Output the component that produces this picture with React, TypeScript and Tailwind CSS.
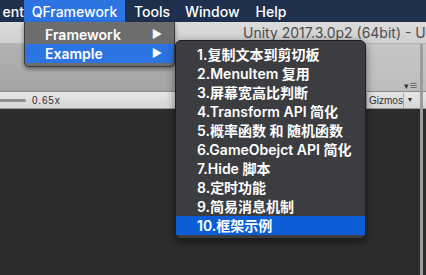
const font = { fontFamily: '"Inter", "Noto Sans CJK SC", sans-serif' };
const small = { fontFamily: '"Liberation Sans", sans-serif' };

const examples = [
  "1.复制文本到剪切板",
  "2.MenuItem 复用",
  "3.屏幕宽高比判断",
  "4.Transform API 简化",
  "5.概率函数 和 随机函数",
  "6.GameObejct API 简化",
  "7.Hide 脚本",
  "8.定时功能",
  "9.简易消息机制",
  "10.框架示例",
];

function Arrow() {
  return <span className="text-[11px] leading-none text-white">▶</span>;
}

export default function App() {
  return (
    <div className="relative w-[426px] h-[275px] overflow-hidden bg-[#2d2d2d]" style={font}>
      {/* menu bar */}
      <div className="flex h-[22px] items-center bg-[#1f304e] text-[14px] font-medium text-white">
        <span className="w-[24px] overflow-hidden whitespace-nowrap text-right">ent</span>
        <span className="flex h-full w-[101px] items-center justify-center bg-[#2c74e2]">QFramework</span>
        <span className="ml-[9px]">Tools</span>
        <span className="ml-[15px]">Window</span>
        <span className="ml-[16px]">Help</span>
      </div>

      {/* title bar */}
      <div className="flex h-[22px] items-center overflow-hidden border-b border-[#b4b4b4] bg-gradient-to-b from-[#dcdcdc] to-[#cfcfcf] pl-[243px] text-[14px] whitespace-nowrap text-[#4d4d4d]">
        Unity 2017.3.0p2 (64bit) - Unti
      </div>

      {/* gray tab area */}
      <div className="flex h-[48px] bg-gradient-to-b from-[#b2b2b2] to-[#a4a4a4] border-b border-[#8a8a8a]">
        <div className="flex-1" />
        <div className="flex w-[62px] items-end justify-end bg-gradient-to-b from-[#c6c6c6] to-[#bdbdbd] pb-[1px] pr-[8px]">
          <span className="text-[9px] leading-none text-[#333]">▾≡</span>
        </div>
      </div>

      {/* toolbar */}
      <div className="flex h-[17px] items-center bg-gradient-to-b from-[#e6e6e6] to-[#d6d6d6] border-b border-[#9a9a9a]" style={small}>
        <div className="h-[3px] w-[26px] rounded-r-full bg-[#8c8c8c]" />
        <span className="ml-[6px] text-[10px] tracking-[0.8px] text-[#2f2f2f]">0.65x</span>
        <div className="flex-1" />
        <div className="flex h-[15px] w-[50px] items-center border-l border-[#a8a8a8] text-[10px] text-[#2f2f2f]">
          <span className="flex-1 pl-[2px]">Gizmos</span>
          <span className="flex h-full w-[13px] items-center justify-center border-l border-[#a8a8a8] text-[8px]">▾</span>
        </div>
        <div className="w-[10px]" />
      </div>

      {/* right edge strip */}
      <div className="absolute right-[3px] top-[44px] bottom-0 w-[3px] bg-[#9c9c9c]" />

      {/* first dropdown */}
      <div className="absolute left-[24px] top-[22px] w-[151px] rounded-b-[5px] border border-t-0 border-[#3a3a3a] bg-[#6d6d6d] pb-[3px] pt-[3px] text-[14px] font-semibold text-white shadow-[0_2px_4px_rgba(0,0,0,0.45)]">
        <div className="flex h-[19px] items-center justify-between pl-[20px] pr-[12px]">
          <span>Framework</span>
          <Arrow />
        </div>
        <div className="flex h-[19px] items-center justify-between bg-[#2c74e2] pl-[20px] pr-[12px]">
          <span>Example</span>
          <Arrow />
        </div>
      </div>

      {/* second dropdown */}
      <div className="absolute left-[175px] top-[40px] w-[191px] rounded-[6px] border border-[#1e1e1e] bg-[#3c3d40] pb-[3px] pt-[4px] text-[14px] font-semibold text-white shadow-[0_3px_8px_rgba(0,0,0,0.5)]">
        {examples.map((label, i) => (
          <div
            key={label}
            className={`flex h-[19px] items-center whitespace-nowrap pl-[21px] ${i === examples.length - 1 ? "bg-[#0d5ed6]" : ""}`}
          >
            {label}
          </div>
        ))}
      </div>
    </div>
  );
}
